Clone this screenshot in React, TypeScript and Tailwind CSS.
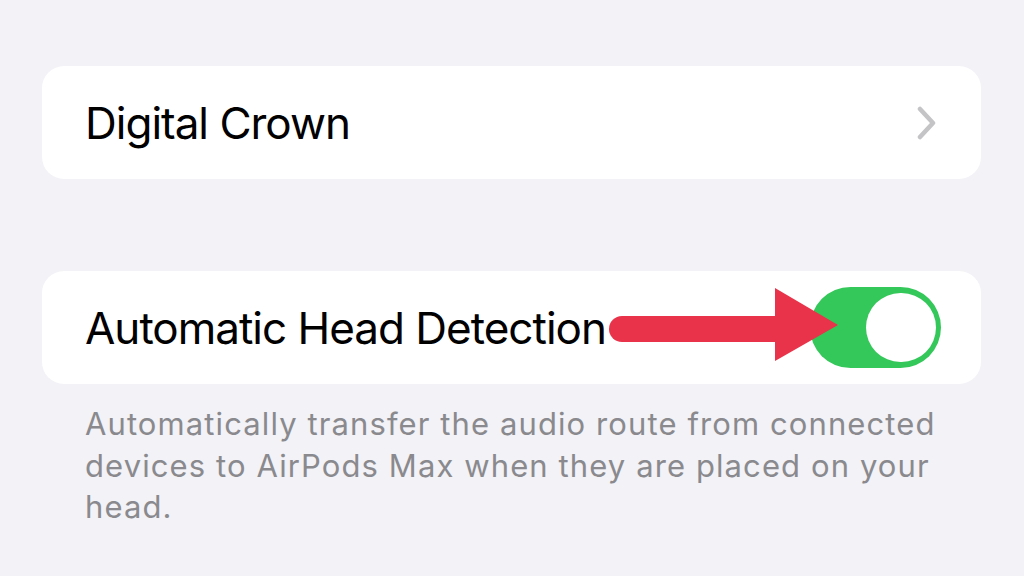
export default function App() {
  const font = { fontFamily: 'Inter, "Liberation Sans", sans-serif' };
  return (
    <div className="w-[1024px] h-[576px] bg-[#f2f2f7] overflow-hidden pt-[66px] pl-[42px] pr-[43px]" style={font}>
      <div className="h-[113px] bg-white rounded-[22px] flex items-center justify-between pl-[43px] pr-[42px]">
        <span className="text-[44px] text-black tracking-[-1px] leading-none">Digital Crown</span>
        <svg width="20" height="34" viewBox="0 0 20 34" className="mr-[2px]">
          <polyline points="3,3 16,17 3,31" fill="none" stroke="#c4c4c7" strokeWidth="4.5" strokeLinecap="round" strokeLinejoin="round" />
        </svg>
      </div>
      <div className="h-[92px]" />
      <div className="h-[113px] bg-white rounded-[22px] flex items-center justify-between pl-[43px] pr-[40px] relative">
        <span className="text-[44px] text-black tracking-[-1px] leading-none">Automatic Head Detection</span>
        <div className="w-[131px] h-[81px] rounded-full bg-[#34c759] relative">
          <div className="absolute right-[5px] top-[6px] w-[70px] h-[69px] rounded-full bg-white" />
        </div>
        <svg className="absolute left-[567px] top-[17px]" width="230" height="76" viewBox="0 0 230 76">
          <path d="M13 41 H166" stroke="#e8334a" strokeWidth="26" strokeLinecap="round" />
          <polygon points="166,0 229,37 166,73" fill="#e8334a" />
        </svg>
      </div>
      <p className="mt-[19px] pl-[43px] pr-[20px] text-[31px] tracking-[1.1px] leading-[41.5px] text-[#8a8a8e]">
        Automatically transfer the audio route from connected devices to AirPods Max when they are placed on your head.
      </p>
    </div>
  );
}
